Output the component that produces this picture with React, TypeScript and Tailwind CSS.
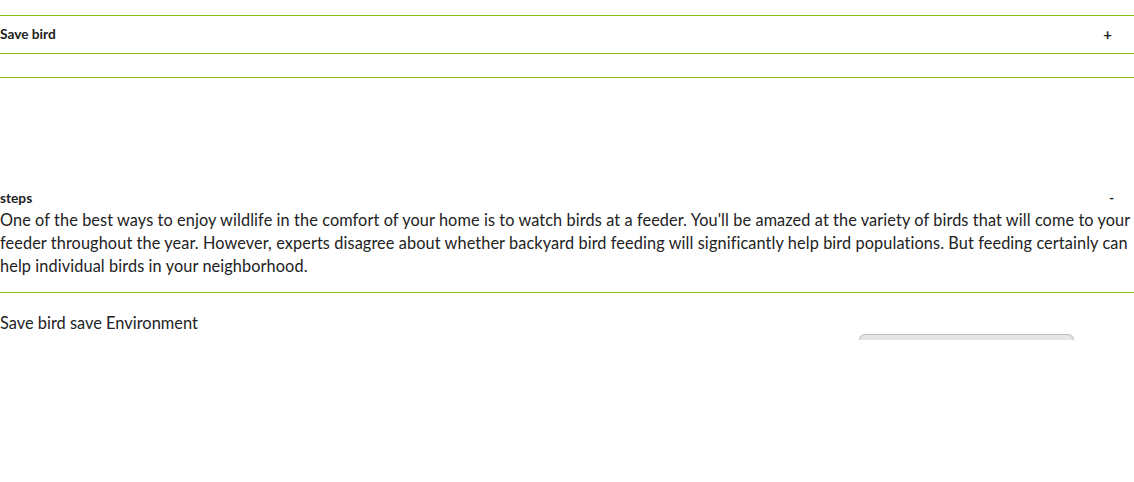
const App = () => {
  return (
    <div className="h-[482px] w-[1134px] overflow-hidden bg-white text-[#222] font-['Lato','Open_Sans',sans-serif]">
      <div className="w-[1200px] pt-[15px]">
        {/* Accordion: Save bird */}
        <div className="border-t border-[#8cbc14]">
          <div className="flex h-[37px] items-center justify-between pr-[88px] text-[13.7px] font-bold">
            <span>Save bird</span>
            <span className="text-[15px]">+</span>
          </div>
        </div>
        <div className="h-[24px] border-t border-[#8cbc14]"></div>
        <div className="border-t border-[#8cbc14]"></div>

        {/* Accordion: steps */}
        <div className="pt-[110px]">
          <div className="flex h-[20px] items-center justify-between pr-[86px] text-[13.7px] font-bold">
            <span>steps</span>
            <span>-</span>
          </div>
          <p className="whitespace-nowrap text-[16.3px] leading-[23px] tracking-[0.1px]">
            One of the best ways to enjoy wildlife in the comfort of your home is to watch birds at a feeder. You'll be amazed at the variety of birds that will come to your
            <br />
            feeder throughout the year. However, experts disagree about whether backyard bird feeding will significantly help bird populations. But feeding certainly can
            <br />
            help individual birds in your neighborhood.
          </p>
        </div>
        <div className="mt-[15px] border-t border-[#8cbc14]"></div>

        <div className="flex items-start justify-between pr-[126px] pt-[20px]">
          <span className="text-[16.4px] leading-[20px]">Save bird save Environment</span>
          <div className="mt-[21px] h-[6px] w-[215px] rounded-t-[6px] border border-b-0 border-[#bdbdbd] bg-[#e5e5e5]"></div>
        </div>
      </div>
    </div>
  );
};

export default App;
